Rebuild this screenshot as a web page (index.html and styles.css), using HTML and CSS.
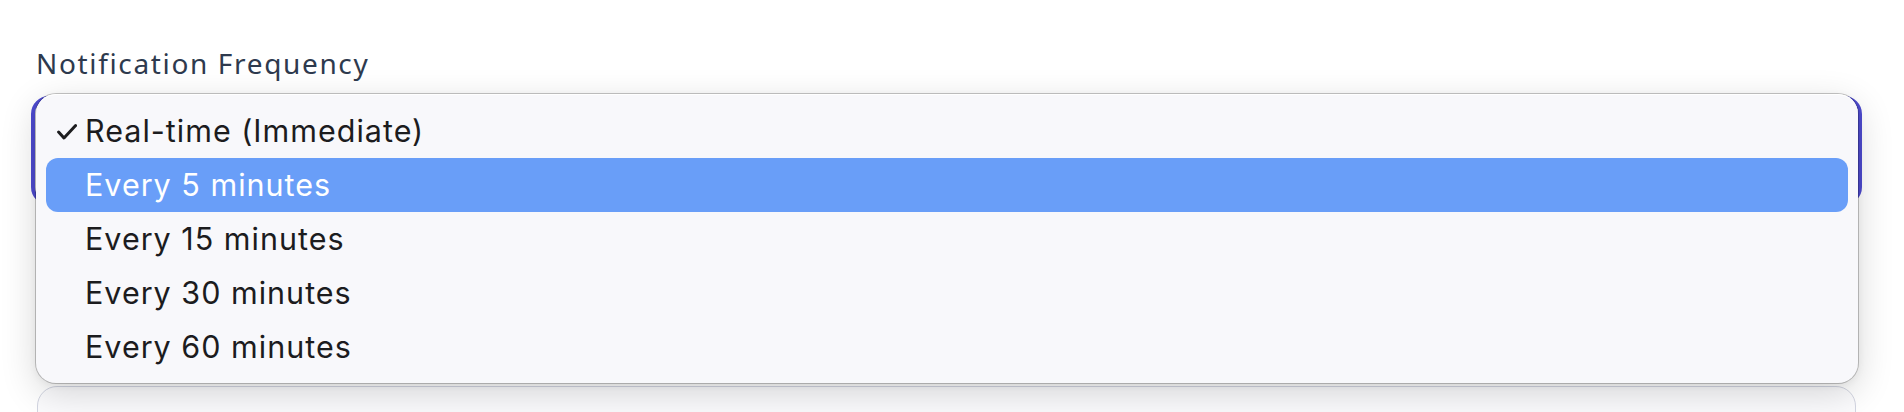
FILE: index.html
```html
<!DOCTYPE html>
<html lang="en">
<head>
<meta charset="utf-8">
<title>Notification Frequency</title>
<link rel="stylesheet" href="styles.css">
</head>
<body>
<div class="page">
  <div class="field">
    <div class="label">Notification Frequency</div>
    <div class="select-wrap">
      <div class="select"></div>
      <ul class="popup">
        <li class="option checked">
          <svg class="check" viewBox="0 0 20 16" width="20" height="16"><path d="M1.6 8 L7 14 L18.6 1.6" fill="none" stroke="#1d1d1f" stroke-width="3" stroke-linecap="round" stroke-linejoin="round"/></svg>
          <span>Real-time (Immediate)</span>
        </li>
        <li class="option active"><span>Every 5 minutes</span></li>
        <li class="option"><span>Every 15 minutes</span></li>
        <li class="option"><span>Every 30 minutes</span></li>
        <li class="option"><span>Every 60 minutes</span></li>
      </ul>
    </div>
    <div class="next-box"></div>
  </div>
</div>
</body>
</html>
```
FILE: styles.css
```css
* { box-sizing: border-box; }
html, body { margin: 0; padding: 0; background: #ffffff; }
body { width: 1904px; height: 412px; overflow: hidden; }
.page { padding: 0 42px 0 31px; }
.field { display: flex; flex-direction: column; }
.label {
  font-family: "Noto Sans", "Open Sans", sans-serif;
  font-size: 28px;
  font-weight: 400;
  line-height: 32px;
  color: #2e3a4e;
  padding: 47px 0 0 5px;
  letter-spacing: 1.65px;
  height: 96px;
}
.select-wrap { position: relative; }
.select {
  height: 109px;
  border: 4px solid #4e4bd0;
  border-radius: 18px;
  background: #ffffff;
}
.popup {
  position: absolute;
  left: 5px;
  top: -2px;
  width: 1822px;
  height: 289px;
  margin: 0;
  padding: 10px 10px 9px 10px;
  list-style: none;
  background: #f8f8fb;
  border-radius: 20px;
  box-shadow: 0 0 0 1px rgba(0,0,0,0.22), inset 0 1px 0 #ffffff, 0 10px 36px rgba(0,0,0,0.16), 0 2px 8px rgba(0,0,0,0.06);
  z-index: 2;
}
.option {
  position: relative;
  height: 54px;
  display: flex;
  align-items: center;
  padding-left: 39px;
  border-radius: 12px;
  font-family: Inter, "Noto Sans", sans-serif;
  font-size: 30.5px;
  line-height: 54px;
  color: #1c1c1e;
  letter-spacing: 1px;
}
.option.active { background: #699ef8; color: #ffffff; }
.check {
  position: absolute;
  left: 11px;
  top: 20px;
}
.next-box {
  margin: 181px 6px 0 6px;
  height: 60px;
  border: 1px solid #d2d5e1;
  border-radius: 20px;
  background: #fbfbfd;
}
```
